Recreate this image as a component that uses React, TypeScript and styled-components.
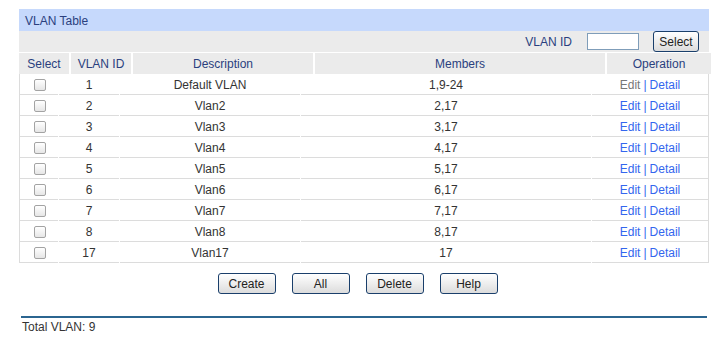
import React from "react";
import styled, { createGlobalStyle } from "styled-components";

const Global = createGlobalStyle`
  body {
    margin: 0;
    background: #ffffff;
    font-family: "Liberation Sans", Arial, sans-serif;
    font-size: 12px;
    color: #333333;
  }
`;

const Page = styled.div`
  padding: 9px 0 0 19px;
  width: 690px;
`;

const TitleBar = styled.div`
  height: 22px;
  line-height: 24px;
  background: #c6d9fc;
  color: #2a3f7e;
  padding-left: 6px;
`;

const SearchRow = styled.div`
  height: 21px;
  background: #ebebeb;
  display: flex;
  align-items: center;
  justify-content: flex-end;
  padding-right: 10px;
  margin-bottom: 1px;
`;

const SearchLabel = styled.span`
  color: #2a3f7e;
  margin-right: 15px;
  padding-top: 1px;
`;

const SearchInput = styled.input`
  width: 52px;
  height: 17px;
  box-sizing: border-box;
  border: 1px solid #7f9db9;
  background: #ffffff;
  margin: 0 14px 0 0;
  padding: 0;
`;

const Btn = styled.button<{ $w?: number; $h?: number }>`
  width: ${(p) => p.$w ?? 58}px;
  height: ${(p) => p.$h ?? 21}px;
  box-sizing: border-box;
  border: 1px solid #1a3f6b;
  border-radius: 3px;
  background: linear-gradient(#ffffff, #ececec 55%, #dcdcdc);
  font-family: "Liberation Sans", Arial, sans-serif;
  font-size: 12px;
  color: #222222;
  padding: 1px 0 0 0;
  cursor: pointer;
`;

const HeadRow = styled.div`
  display: grid;
  grid-template-columns: 50px 60px 180px 290px 104px;
  column-gap: 2px;
  background: #ffffff;
`;

const HeadCell = styled.div`
  height: 21px;
  line-height: 23px;
  background: #ebebeb;
  color: #2a3f7e;
  text-align: center;
`;

const Body = styled.div`
  border-left: 1px solid #dcdcdc;
  border-right: 1px solid #dcdcdc;
`;

const Row = styled.div`
  display: grid;
  grid-template-columns: 38px 60px 180px 290px 116px;
  column-gap: 1px;
`;

const Cell = styled.div`
  height: 21px;
  line-height: 18px;
  box-sizing: border-box;
  padding-top: 2px;
  border-bottom: 1px solid #dcdcdc;
  text-align: center;
  display: flex;
  align-items: center;
  justify-content: center;
`;

const Check = styled.input`
  appearance: none;
  width: 12px;
  height: 12px;
  margin: 0 0 0 2px;
  border: 1px solid #a3a3a3;
  border-radius: 2px;
  background: linear-gradient(#ffffff, #e6e6e6);
`;

const Link = styled.a<{ $muted?: boolean }>`
  color: ${(p) => (p.$muted ? "#777777" : "#3366ee")};
  text-decoration: none;
  cursor: pointer;
`;

const Sep = styled.span`
  color: #3366ee;
  margin: 0 3px;
`;

const Actions = styled.div`
  display: flex;
  justify-content: center;
  gap: 16px;
  padding-right: 13px;
  margin-top: 10px;
`;

const Rule = styled.div`
  height: 2px;
  background: #2b6590;
  margin: 22px 2px 0 2px;
`;

const Total = styled.div`
  padding: 2px 0 0 3px;
  line-height: 14px;
`;

const vlans = [
  { id: 1, desc: "Default VLAN", members: "1,9-24" },
  { id: 2, desc: "Vlan2", members: "2,17" },
  { id: 3, desc: "Vlan3", members: "3,17" },
  { id: 4, desc: "Vlan4", members: "4,17" },
  { id: 5, desc: "Vlan5", members: "5,17" },
  { id: 6, desc: "Vlan6", members: "6,17" },
  { id: 7, desc: "Vlan7", members: "7,17" },
  { id: 8, desc: "Vlan8", members: "8,17" },
  { id: 17, desc: "Vlan17", members: "17" },
];

export default function App() {
  return (
    <Page>
      <Global />
      <TitleBar>VLAN Table</TitleBar>
      <SearchRow>
        <SearchLabel>VLAN ID</SearchLabel>
        <SearchInput type="text" />
        <Btn $w={46} $h={21}>Select</Btn>
      </SearchRow>
      <HeadRow>
        <HeadCell>Select</HeadCell>
        <HeadCell>VLAN ID</HeadCell>
        <HeadCell>Description</HeadCell>
        <HeadCell>Members</HeadCell>
        <HeadCell>Operation</HeadCell>
      </HeadRow>
      <Body>
        {vlans.map((v) => (
          <Row key={v.id}>
            <Cell>
              <Check type="checkbox" />
            </Cell>
            <Cell>{v.id}</Cell>
            <Cell>{v.desc}</Cell>
            <Cell>{v.members}</Cell>
            <Cell>
              <Link $muted={v.id === 1}>Edit</Link>
              <Sep>|</Sep>
              <Link>Detail</Link>
            </Cell>
          </Row>
        ))}
      </Body>
      <Actions>
        <Btn>Create</Btn>
        <Btn>All</Btn>
        <Btn>Delete</Btn>
        <Btn>Help</Btn>
      </Actions>
      <Rule />
      <Total>Total VLAN: 9</Total>
    </Page>
  );
}
